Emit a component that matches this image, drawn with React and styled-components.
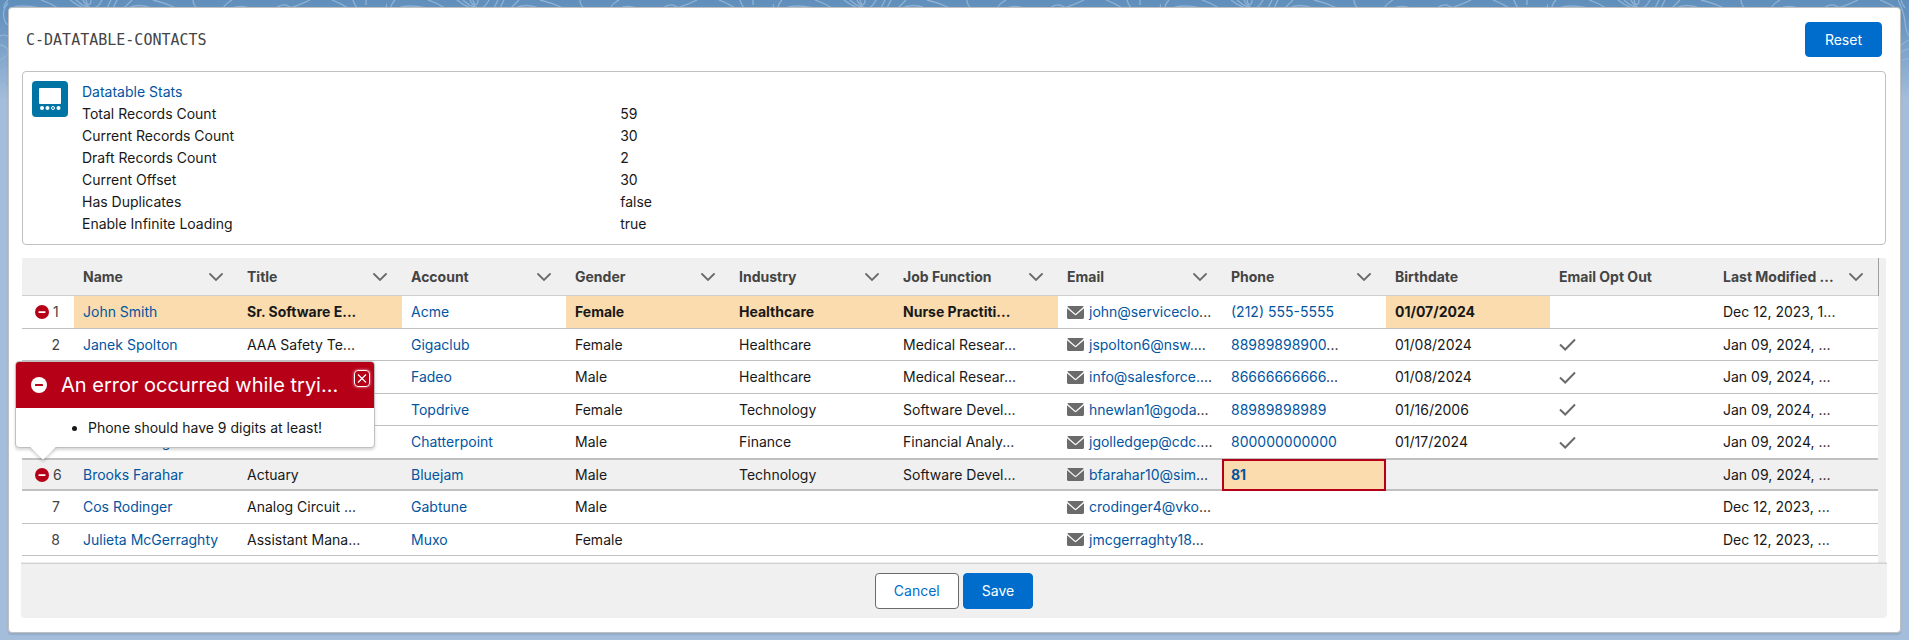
import React from "react";
import styled, { createGlobalStyle, css } from "styled-components";

const color = {
  link: "#0155a1",
  brand: "#006dcc",
  text: "#181818",
  muted: "#444444",
  icon: "#6b6b6b",
  line: "#c0c0c0",
  panel: "#f0f0f0",
  edited: "#fadcae",
  error: "#b60018",
};

const GlobalStyle = createGlobalStyle`
  *, *::before, *::after { box-sizing: border-box; }
  body {
    margin: 0;
    background: #a4bddb linear-gradient(#618fbb 0, #6a96c1 24px, #a4bddb 100px) no-repeat;
    color: ${color.text};
    font: 14px/22px Inter, "Liberation Sans", sans-serif;
  }
`;

const Backdrop = styled.svg`
  position: absolute;
  top: 0;
  ${(p) => (p.$side === "right" ? "right: 0;" : "left: 0;")}
  width: ${(p) => p.$width};
  height: ${(p) => p.$height}px;
  fill: none;
  stroke: #8fb2d4;
  stroke-width: 1.3;
`;

const Page = styled.main`
  position: relative;
  padding: 7px 8px;
`;

const Card = styled.article`
  position: relative;
  padding: 14px 14px 14px 13px;
  background: #fff;
  border: 1px solid ${color.line};
  border-radius: 4px;
  box-shadow: 0 2px 2px rgba(0, 0, 0, 0.1);
`;

const CardHeader = styled.header`
  display: flex;
  align-items: center;
  justify-content: space-between;
  padding: 0 4px;
  margin-bottom: 14px;
`;

const CardTitle = styled.h1`
  margin: 0;
  color: ${color.muted};
  font: 15px/22px "DejaVu Sans Mono", "Liberation Mono", monospace;
`;

const Button = styled.button`
  height: ${(p) => (p.$tall ? 36 : 35)}px;
  padding: 0 ${(p) => (p.$tall ? 18 : 19)}px;
  border: 1px solid ${(p) => (p.$brand ? color.brand : color.icon)};
  border-radius: 4px;
  background: ${(p) => (p.$brand ? color.brand : "#fff")};
  color: ${(p) => (p.$brand ? "#fff" : color.brand)};
  font: inherit;
`;

const Stats = styled.section`
  display: flex;
  gap: 14px;
  padding: 9px;
  border: 1px solid ${color.line};
  border-radius: 4px;
`;

const StatsIcon = styled.svg`
  flex: none;
  width: 36px;
  height: 36px;
`;

const StatsBody = styled.div`
  flex: 1;
`;

const StatsTitle = styled.h2`
  margin: 0;
  font: inherit;
`;

const StatsList = styled.dl`
  display: grid;
  grid-template-columns: 30% 1fr;
  margin: 0;
  dd { margin: 0; }
`;

const Link = styled.a`
  color: ${color.link};
  text-decoration: none;
`;

const TableRegion = styled.section`
  position: relative;
  margin-top: 13px;
`;

const Scroller = styled.div`
  display: flex;
  height: 305px;
  overflow: hidden;
  background: ${color.panel};
  padding-right: 8px;
`;

const Table = styled.table`
  flex: 1;
  width: 100%;
  table-layout: fixed;
  border-collapse: separate;
  border-spacing: 0;
  align-self: flex-start;
  background: #fff;
`;

const HeadCell = styled.th`
  height: 38px;
  padding: 0 15px 0 9px;
  background: ${color.panel};
  border-bottom: 1px solid #cfcfcf;
  color: ${color.muted};
  font-weight: 700;
  text-align: left;
  &:first-child { width: 52px; }
  &:last-child { box-shadow: 1px 0 #a0a0a0; }
`;

const HeadContent = styled.div`
  display: flex;
  justify-content: space-between;
  align-items: center;
  white-space: nowrap;
`;

const MenuButton = styled.button`
  display: flex;
  padding: 0;
  border: 0;
  background: none;
  color: ${color.icon};
  svg { width: 14px; height: 14px; }
`;

const Cell = styled.td`
  height: inherit;
  padding: 0 9px;
  overflow: hidden;
  white-space: nowrap;
  line-height: 20px;
  border-bottom: 1px solid ${color.line};
  background: ${(p) => (p.$edited ? color.edited : "transparent")};
  ${(p) => p.$strong && css`font-weight: 700;`}
`;

const Row = styled.tr`
  height: 32px;
  &:nth-child(odd) { height: 33px; }
  ${(p) =>
    p.$active &&
    css`
      background: ${color.panel};
      ${Cell} { box-shadow: inset 0 1px ${color.line}, inset 0 -1px ${color.line}; }
      ${Cell}[aria-invalid="true"] { box-shadow: none; outline: 2px solid ${color.error}; outline-offset: -2px; }
    `}
`;

const NumberBox = styled.div`
  display: flex;
  align-items: center;
  justify-content: ${(p) => (p.$error ? "flex-start" : "flex-end")};
  gap: 4px;
  padding: 0 5px 0 4px;
  color: ${color.muted};
`;

const IconButton = styled.button`
  display: flex;
  padding: 0;
  border: 0;
  background: none;
  color: ${color.error};
  svg { width: 14px; height: 14px; }
`;

const MailBox = styled.span`
  display: flex;
  align-items: center;
  gap: 5px;
  svg { flex: none; width: 17px; height: 13px; }
`;

const CheckIcon = styled.svg`
  display: block;
  width: 17px;
  height: 13px;
`;

const Popover = styled.div`
  position: absolute;
  z-index: 2;
  top: 103px;
  left: -7px;
  width: 360px;
  background: #fff;
  border: 1px solid ${color.line};
  border-radius: 4px;
  box-shadow: 0 2px 3px rgba(0, 0, 0, 0.16);
  &::after {
    content: "";
    position: absolute;
    left: 18px;
    bottom: -9px;
    width: 18px;
    height: 18px;
    background: #fff;
    box-shadow: 2px 2px 3px rgba(0, 0, 0, 0.16);
    transform: rotate(45deg);
  }
`;

const PopoverHeader = styled.header`
  display: flex;
  align-items: center;
  gap: 14px;
  height: 46px;
  padding: 0 4px 0 15px;
  border-radius: 3px 3px 0 0;
  background: ${color.error};
  color: #fff;
  > svg { flex: none; width: 16px; height: 16px; }
`;

const PopoverTitle = styled.h2`
  flex: 1;
  margin: 0;
  font: 20px/24px Inter, "Liberation Sans", sans-serif;
  white-space: nowrap;
`;

const CloseButton = styled.button`
  display: flex;
  align-self: flex-start;
  margin-top: 8px;
  padding: 2px;
  width: 16px;
  height: 17px;
  border: 1px solid #fff;
  border-radius: 4px;
  background: none;
  color: #fff;
  box-shadow: 0 0 3px rgba(255, 255, 255, 0.7);
`;

const PopoverBody = styled.ul`
  margin: 0;
  padding: 9px 12px 8px 72px;
`;

const Footer = styled.footer`
  position: relative;
  display: flex;
  justify-content: center;
  gap: 4px;
  margin: 0 -1px;
  padding: 9px;
  background: ${color.panel};
  border-top: 1px solid #d2d2d2;
  border-radius: 0 0 4px 4px;
  box-shadow: 0 -1px 1px rgba(0, 0, 0, 0.08);
`;

const ErrorIcon = ({ bar }) => (
  <svg viewBox="0 0 16 16" aria-hidden="true">
    <circle cx="8" cy="8" r="8" fill="currentColor" />
    <rect x="4" y="7" width="8" height="2" rx="0.5" fill={bar} />
  </svg>
);

const Mail = () => (
  <svg viewBox="0 0 17 13" aria-hidden="true">
    <path d="M1.4 0h14.2c.5 0 .9.4 1 .8L8.5 8 .4.8C.5.3.9 0 1.4 0Z" fill={color.icon} />
    <path d="M0 2.2 7.6 8.8c.5.5 1.300.5 1.800 0L17 2.200v9.300c0 .8-.7 1.500-1.500 1.500h-14C.7 13 0 12.300 0 11.500Z" fill={color.icon} />
  </svg>
);

const Check = () => (
  <CheckIcon viewBox="0 0 17 13" role="img" aria-label="Yes">
    <path d="M1 6.500 6.200 11.500 16 1.500" fill="none" stroke={color.icon} strokeWidth="2" />
  </CheckIcon>
);

const columns = [
  ["Name", true], ["Title", true], ["Account", true], ["Gender", true],
  ["Industry", true], ["Job Function", true], ["Email", true], ["Phone", true],
  ["Birthdate", false], ["Email Opt Out", false], ["Last Modified ...", true],
];

const stats = [
  ["Total Records Count", "59"],
  ["Current Records Count", "30"],
  ["Draft Records Count", "2"],
  ["Current Offset", "30"],
  ["Has Duplicates", "false"],
  ["Enable Infinite Loading", "true"],
];

const keys = ["name", "title", "account", "gender", "industry", "job", "email", "phone", "birth", "optOut", "modified"];
const linked = ["name", "account", "phone"];

const records = [
  { values: ["John Smith", "Sr. Software E...", "Acme", "Female", "Healthcare", "Nurse Practiti...", "john@serviceclo...", "(212) 555-5555", "01/07/2024", false, "Dec 12, 2023, 1..."], error: true, edited: ["name", "title", "gender", "industry", "job", "birth"] },
  { values: ["Janek Spolton", "AAA Safety Te...", "Gigaclub", "Female", "Healthcare", "Medical Resear...", "jspolton6@nsw....", "88989898900...", "01/08/2024", true, "Jan 09, 2024, ..."] },
  { values: ["", "", "Fadeo", "Male", "Healthcare", "Medical Resear...", "info@salesforce....", "86666666666...", "01/08/2024", true, "Jan 09, 2024, ..."] },
  { values: ["", "", "Topdrive", "Female", "Technology", "Software Devel...", "hnewlan1@goda...", "88989898989", "01/16/2006", true, "Jan 09, 2024, ..."] },
  { values: ["Jean Golledge", "", "Chatterpoint", "Male", "Finance", "Financial Analy...", "jgolledgep@cdc....", "800000000000", "01/17/2024", true, "Jan 09, 2024, ..."] },
  { values: ["Brooks Farahar", "Actuary", "Bluejam", "Male", "Technology", "Software Devel...", "bfarahar10@sim...", "81", "", false, "Jan 09, 2024, ..."], error: true, active: true, edited: ["phone"], invalid: "phone" },
  { values: ["Cos Rodinger", "Analog Circuit ...", "Gabtune", "Male", "", "", "crodinger4@vko...", "", "", false, "Dec 12, 2023, ..."] },
  { values: ["Julieta McGerraghty", "Assistant Mana...", "Muxo", "Female", "", "", "jmcgerraghty18...", "", "", false, "Dec 12, 2023, ..."] },
  { values: ["", "", "", "", "", "", "", "", "", false, ""], blank: true },
];

/* Link text with the trailing dots left in the body colour. */
const LinkText = ({ value }) => {
  const cut = value.endsWith("...");
  return (
    <span>
      <Link href="#">{cut ? value.slice(0, -3) : value}</Link>
      {cut && "..."}
    </span>
  );
};

const CellContent = ({ field, value }) => {
  if (field === "optOut") return value ? <Check /> : null;
  if (!value) return null;
  if (field === "email") return <MailBox><Mail /><LinkText value={value} /></MailBox>;
  if (linked.includes(field)) return <LinkText value={value} />;
  return value;
};

const Contours = () => (
  <>
    <Backdrop $width="100%" $height={8} aria-hidden="true">
      <defs>
        <pattern id="contours" width="387" height="8" patternUnits="userSpaceOnUse">
          <path d="M8 0Q4 4 4 8M12 8Q20 4 40 8M41 0Q50 3 58 8M70 0Q76 5 84 8M76 0Q81 5 89 8M86 0Q87 5 89 4.500T91 0M83 0Q85 5 91 8M102 0Q99 6 95 8M111 0 107 8M117 0 113 8M132 0 124 8M128 8Q138 3 152 8M153 0Q166 3 176 8M193 0Q193 5 197 8M232 0Q226 3 223 8M232 8Q241 5 250 8M276 8Q283 3 288 6T296 8M310 0Q300 5 290 8M332 0Q342 4 348 8M353 0Q354 4 357 8M366 0V5M387 4 386 8" />
        </pattern>
      </defs>
      <rect width="100%" height="8" fill="url(#contours)" stroke="none" />
    </Backdrop>
    <Backdrop $width="9px" $height={110} aria-hidden="true">
      <path d="M8 3Q2 10 4 18T9 24M0 36Q5 34 9 37M0 45Q7 46 8 51T0 60M0 72Q5 68 9 70M0 78Q6 80 9 86" />
    </Backdrop>
    <Backdrop $side="right" $width="11px" $height={110} aria-hidden="true">
      <path d="M0 0Q6 12 7 22T11 36M1 48Q4 43 11 40M1 54Q5 50 11 49M1 62Q5 59 11 59M1 70Q6 69 11 74M1 79Q7 82 11 78" />
    </Backdrop>
  </>
);

export default function App() {
  return (
    <Page>
      <GlobalStyle />
      <Contours />
      <Card>
        <CardHeader>
          <CardTitle>C-DATATABLE-CONTACTS</CardTitle>
          <Button $brand type="button">Reset</Button>
        </CardHeader>

        <Stats>
          <StatsIcon viewBox="0 0 36 36" aria-hidden="true">
            <rect width="36" height="36" rx="4" fill="#0074a5" />
            <rect x="7" y="7" width="22" height="16" rx="1" fill="#fff" />
            <circle cx="10" cy="27" r="2" fill="#fff" />
            <circle cx="15.500" cy="27" r="2" fill="#fff" />
            <circle cx="21" cy="27" r="1.500" fill="none" stroke="#fff" />
            <circle cx="26.500" cy="27" r="2" fill="#fff" />
          </StatsIcon>
          <StatsBody>
            <StatsTitle><Link href="#">Datatable Stats</Link></StatsTitle>
            <StatsList>
              {stats.map(([label, value]) => (
                <React.Fragment key={label}>
                  <dt>{label}</dt>
                  <dd>{value}</dd>
                </React.Fragment>
              ))}
            </StatsList>
          </StatsBody>
        </Stats>

        <TableRegion>
          <Scroller>
            <Table>
              <thead>
                <tr>
                  <HeadCell aria-label="Row number" />
                  {columns.map(([label, menu]) => (
                    <HeadCell key={label} scope="col">
                      <HeadContent>
                        {label}
                        {menu && (
                          <MenuButton type="button" aria-label={`${label} column actions`}>
                            <svg viewBox="0 0 14 14" aria-hidden="true">
                              <path d="M1 4 7 10 13 4" fill="none" stroke="currentColor" strokeWidth="1.800" strokeLinecap="round" />
                            </svg>
                          </MenuButton>
                        )}
                      </HeadContent>
                    </HeadCell>
                  ))}
                </tr>
              </thead>
              <tbody>
                {records.map((r, i) => (
                  <Row key={i} $active={r.active}>
                    <Cell>
                      <NumberBox $error={r.error}>
                        {r.error && (
                          <IconButton type="button" aria-label={`Row ${i + 1} errors`}>
                            <ErrorIcon bar="#fff" />
                          </IconButton>
                        )}
                        {r.blank ? null : i + 1}
                      </NumberBox>
                    </Cell>
                    {keys.map((field, c) => {
                      const edited = !!r.edited?.includes(field);
                      return (
                        <Cell
                          key={field}
                          $edited={edited}
                          $strong={edited && field !== "name"}
                          aria-invalid={r.invalid === field ? "true" : undefined}
                        >
                          <CellContent field={field} value={r.values[c]} />
                        </Cell>
                      );
                    })}
                  </Row>
                ))}
              </tbody>
            </Table>
          </Scroller>
          <Popover role="dialog" aria-labelledby="error-title">
            <PopoverHeader>
              <ErrorIcon bar={color.error} />
              <PopoverTitle id="error-title">An error occurred while tryi...</PopoverTitle>
              <CloseButton type="button" aria-label="Close">
                <svg viewBox="0 0 10 11" aria-hidden="true">
                  <path d="M1 1.500 9 9.500M9 1.500 1 9.500" stroke="currentColor" strokeWidth="1.200" />
                </svg>
              </CloseButton>
            </PopoverHeader>
            <PopoverBody>
              <li>Phone should have 9 digits at least!</li>
            </PopoverBody>
          </Popover>
        </TableRegion>

        <Footer>
          <Button type="button" $tall>Cancel</Button>
          <Button type="button" $tall $brand>Save</Button>
        </Footer>
      </Card>
    </Page>
  );
}
